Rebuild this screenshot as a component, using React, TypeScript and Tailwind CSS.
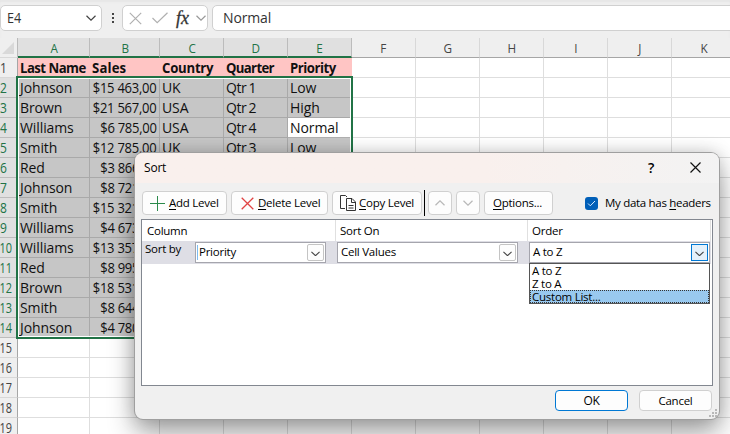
import { ReactNode } from "react";

const ui = "font-['Open_Sans','Noto_Sans',sans-serif]";
const columns = [
  { name: "A", width: 72 },
  { name: "B", width: 70 },
  { name: "C", width: 64 },
  { name: "D", width: 64 },
  { name: "E", width: 64 },
  { name: "F", width: 64 },
  { name: "G", width: 64 },
  { name: "H", width: 64 },
  { name: "I", width: 64 },
  { name: "J", width: 64 },
  { name: "K", width: 64 },
];

const headingFit = [
  "tracking-[-.55px]",
  "tracking-[.15px]",
  "tracking-[-.25px]",
  "tracking-[-.7px]",
  "tracking-[-.5px]",
];

const rows: string[][] = [
  ["Last Name", "Sales", "Country", "Quarter", "Priority"],
  ["Johnson", "$15 463,00", "UK", "Qtr 1", "Low"],
  ["Brown", "$21 567,00", "USA", "Qtr 2", "High"],
  ["Williams", "$6 785,00", "USA", "Qtr 4", "Normal"],
  ["Smith", "$12 785,00", "UK", "Qtr 3", "Low"],
  ["Red", "$3 866,00"],
  ["Johnson", "$8 721,00"],
  ["Smith", "$15 321,00"],
  ["Williams", "$4 673,00"],
  ["Williams", "$13 357,00"],
  ["Red", "$8 995,00"],
  ["Brown", "$18 531,00"],
  ["Smith", "$8 644,00"],
  ["Johnson", "$4 780,00"],
  [], [], [], [], [],
];

function Chevron({ className = "", w = 10, up = false }: { className?: string; w?: number; up?: boolean }) {
  return (
    <svg width={w} height={w / 2 + 1} viewBox="0 0 10 6" className={className} fill="none" stroke="currentColor" strokeWidth="1.2">
      <path d={up ? "M.5 5.2 5 .8l4.5 4.4" : "M.5.8 5 5.2 9.5.8"} />
    </svg>
  );
}

function FormulaBar() {
  return (
    <div className="flex h-[38px] items-start bg-[#efefef] pt-[5px] text-[14px] text-[#333] shadow-[inset_0_2px_2px_#e6e6e6]">
      <div className="flex h-[26px] w-[102px] shrink-0 items-center justify-between rounded-[5px] border border-[#d0d0d0] bg-white pr-[5px] pl-[6px]">
        <span className="origin-left scale-x-[.9] pb-px leading-[22px]">E4</span>
        <Chevron className="text-[#444]" />
      </div>
      <div className="ml-[9px] flex h-[26px] w-[3px] shrink-0 flex-col items-center justify-center gap-[2px]">
        <i className="size-[2px] bg-[#444]" />
        <i className="size-[2px] bg-[#444]" />
        <i className="size-[2px] bg-[#444]" />
      </div>
      <div className="ml-[8px] flex h-[26px] w-[86px] shrink-0 items-center rounded-[5px] border border-[#d0d0d0] bg-white pl-[6px]">
        <svg width="13" height="13" viewBox="0 0 13 13" fill="none" stroke="#b0b0b0" strokeWidth="1.2">
          <path d="m.8.8 11.4 11.4M12.2.8.8 12.2" />
        </svg>
        <svg width="16" height="12" viewBox="0 0 16 12" className="ml-[10px]" fill="none" stroke="#b0b0b0" strokeWidth="1.2">
          <path d="m.5 6 4.7 4.7L15.5.7" />
        </svg>
        <span className="ml-[8px] w-[16px] pb-px font-['Liberation_Serif',serif] text-[18px] leading-[20px] text-[#333] italic [-webkit-text-stroke:.3px]">fx</span>
        <Chevron className="ml-[4px] text-[#999]" />
      </div>
      <div className="ml-[4px] flex h-[26px] w-[530px] shrink-0 items-center rounded-l-[5px] border border-[#d0d0d0] bg-white pl-[10px]">
        <span className="pb-px leading-[22px] tracking-[-.15px]">Normal</span>
      </div>
    </div>
  );
}

function Sheet() {
  return (
    <div className="flex w-[800px] flex-col text-[14px] leading-[20px]">
      <div className="flex h-[20px]">
        <div className="flex w-[18px] items-end justify-end border-r border-b border-r-[#bbb] border-b-[#d8d8d8] bg-[#efefef] pr-[3px] pb-[3px]">
          <svg width="12" height="12" viewBox="0 0 12 12"><path d="M12 0v12H0z" fill="#d9d9d9" /></svg>
        </div>
        {columns.map((c, i) => (
          <div
            key={c.name}
            style={{ width: c.width }}
            className={
              i < 5
                ? "shrink-0 border-r border-b-2 border-r-[#bcbcbc] border-b-[#217346] bg-[#e0e0e0] pl-px text-center text-[13px] leading-[20px] text-[#217346]"
                : "shrink-0 border-r border-b border-r-[#d8d8d8] border-b-[#a6a6a6] bg-[#efefef] text-center text-[13px] leading-[20px] text-[#444]"
            }
          >
            <span className="inline-block scale-x-[.9]">{c.name}</span>
          </div>
        ))}
      </div>
      {rows.map((row, r) => (
        <div key={r} className="flex h-[20px]">
          <div
            className={
              "flex w-[18px] shrink-0 justify-end border-r border-b text-[14px] leading-[20px] " +
              (r > 0 && r < 14 ? "border-r-[#217346] border-b-[#bcbcbc] bg-[#e0e0e0] text-[#217346]" : "border-r-[#a6a6a6] border-b-[#d8d8d8] bg-[#efefef] text-[#444]") +
              (r < 9 ? " pr-[10px]" : " pr-[5px]")
            }
          >
            <span className={r < 9 ? "origin-right scale-x-[.86]" : "origin-right scale-x-[.78]"}>{r + 1}</span>
          </div>
          {columns.map((c, i) => {
            const selected = r > 0 && r < 14 && i < 5;
            const active = r === 3 && i === 4;
            const tone = r === 0 && i < 5
              ? "bg-[#ffc5c4] border-[#ffc5c4] font-bold"
              : active
                ? "bg-white border-[#b0b0b0]"
                : selected
                  ? "bg-[#c6c6c6] border-[#a9a9a9]"
                  : "bg-white border-[#dedede]";
            return (
              <div
                key={c.name}
                style={{ width: c.width }}
                className={
                  "flex shrink-0 border-r border-b pl-[2px] leading-[19px] whitespace-pre text-[#111] " + tone +
                  (i === 1 && r > 0 ? " justify-end pr-[2.5px]" : "")
                }
              >
                <span
                  className={
                    r === 0
                      ? "origin-left scale-x-[.94] " + (headingFit[i] ?? "")
                      : i === 1
                        ? "origin-right scale-x-[.93] tracking-[-.3px]"
                        : i === 3
                          ? "tracking-[-.5px] [word-spacing:-.8px]"
                          : "tracking-[-.1px]"
                  }
                >
                  {row[i] ?? ""}
                </span>
              </div>
            );
          })}
        </div>
      ))}
    </div>
  );
}

function ToolButton({ className, children }: { className: string; children?: ReactNode }) {
  return (
    <div className={"flex h-[24px] shrink-0 items-center rounded-[4px] border border-[#d0d0d0] bg-[#fdfdfd] " + className}>
      {children}
    </div>
  );
}

function Combo({ className, children, open = false, caret = false }: { className: string; children: ReactNode; open?: boolean; caret?: boolean }) {
  return (
    <div className={"flex h-[21px] shrink-0 items-center justify-between border border-[#a5a5ad] bg-white pr-px pl-px " + className}>
      <span className="flex items-center">
        <i className={"h-[15px] w-px " + (caret ? "bg-[#7dbcf0]" : "")} />
        <span className="ml-[1px] pb-[2px] leading-[16px]">{children}</span>
      </span>
      <span className={"flex h-[17px] w-[17px] items-center justify-center border pt-[2px] " + (open ? "border-[#0078d4] bg-[#e5f1fb]" : "rounded-[2px] border-[#c4c4c4] bg-[#fdfdfd]")}>
        <Chevron w={9} className="text-[#444]" />
      </span>
    </div>
  );
}

function SortDialog() {
  return (
    <div className="absolute top-[153px] left-[135px] flex h-[266px] w-[584px] flex-col rounded-[8px] bg-[#f0f0f0] text-[11.5px] leading-[16px] tracking-[-.25px] text-black shadow-[0_0_0_1px_#9f9f9f,0_16px_28px_rgba(0,0,0,.32),0_0_18px_rgba(0,0,0,.22)]">
      <div className="flex h-[30px] shrink-0 items-center rounded-t-[8px] bg-linear-to-r from-[#f9f0ed] via-[#f9f0ed] via-60% to-[#f3f3f3] pr-[18px] pl-[9px]">
        <span className="text-[12px] tracking-[-.2px]">Sort</span>
        <span className="ml-auto pb-px text-[14px] font-semibold">?</span>
        <svg width="11" height="11" viewBox="0 0 11 11" className="mb-[2px] ml-[36px]" fill="none" stroke="#111" strokeWidth="1.2">
          <path d="m.5.5 10 10M10.500.5l-10 10" />
        </svg>
      </div>
      <div className="mt-[7px] flex h-[26px] shrink-0 items-center pl-[7px]">
        <ToolButton className="w-[85px] pl-[7px]">
          <svg width="15" height="15" viewBox="0 0 15 15" fill="none" stroke="#2b8a4b" strokeWidth="1"><path d="M7.500 0v15M0 7.500h15" /></svg>
          <span className="ml-[4px]"><u className="underline-offset-2">A</u>dd Level</span>
        </ToolButton>
        <ToolButton className="ml-[4px] w-[97px] pl-[9px]">
          <svg width="13" height="13" viewBox="0 0 13 13" fill="none" stroke="#e04343" strokeWidth="1.3"><path d="m.7.7 11.600 11.600M12.300.7.7 12.300" /></svg>
          <span className="ml-[4px]"><u className="underline-offset-2">D</u>elete Level</span>
        </ToolButton>
        <ToolButton className="ml-[4px] w-[90px] pl-[7px]">
          <svg width="17" height="17" viewBox="0 0 17 17" fill="none" stroke="#333" strokeWidth="1">
            <path d="M5 13.500H.5v-13h5l1.500 1.500M6.500 3.500h5.500l3.500 3.500v8.500h-9zM11.500 3.500v4h4M8.500 10.500h5M8.500 13h5" />
          </svg>
          <span className="ml-[2px]"><u className="underline-offset-2">C</u>opy Level</span>
        </ToolButton>
        <i className="ml-[2px] h-[26px] w-px bg-black" />
        <ToolButton className="ml-[3px] w-[24px] justify-center"><Chevron up className="text-[#b8b8b8]" /></ToolButton>
        <ToolButton className="ml-[4px] w-[24px] justify-center"><Chevron className="text-[#b8b8b8]" /></ToolButton>
        <ToolButton className="ml-[4px] w-[69px] pl-[8px]"><span><u className="underline-offset-2">O</u>ptions...</span></ToolButton>
        <span className="ml-[32px] flex size-[13px] items-center justify-center rounded-[3px] bg-[#005fb8]">
          <svg width="9" height="7" viewBox="0 0 9 7" fill="none" stroke="#d8ebff" strokeWidth="1"><path d="m1 3.500 2.300 2.300L8 1" /></svg>
        </span>
        <span className="ml-[7px] whitespace-nowrap tracking-[-.3px]">My data has <u className="underline-offset-2">h</u>eaders</span>
      </div>
      <div className="mt-[3px] ml-[6px] flex h-[167px] w-[572px] shrink-0 flex-col border border-[#828790] bg-white">
        <div className="flex h-[21px] shrink-0 items-center">
          <span className="h-full w-[194px] border-r border-[#e0e0e0] pl-[5px] leading-[22px]">Column</span>
          <span className="h-full w-[192px] border-r border-[#e0e0e0] pl-[4px] leading-[22px]">Sort On</span>
          <span className="h-full w-[183px] border-r border-[#e0e0e0] pl-[4px] leading-[22px]">Order</span>
        </div>
        <div className="relative flex h-[23px] w-[569px] shrink-0 items-center bg-[#dedee5]">
          <span className="w-[53px] self-start pl-[3px]">Sort by</span>
          <Combo className="w-[131px]" caret>Priority</Combo>
          <Combo className="ml-[11px] w-[181px]">Cell Values</Combo>
          <Combo className="ml-[11px] w-[181px]" open>A to Z</Combo>
          <div className="absolute top-[22px] left-[387px] flex h-[41px] w-[181px] flex-col border border-[#555] bg-white leading-[14px]">
            <span className="h-[13px] pl-[2px]">A to Z</span>
            <span className="h-[13px] pl-[2px]">Z to A</span>
            <span className="h-[13px] border border-dotted border-[#333] bg-[#99c9ef] pl-px leading-[12px]">Custom List...</span>
          </div>
        </div>
      </div>
      <div className="mt-[4px] flex justify-end gap-[11px] pr-[7px]">
        <div className="flex h-[21px] w-[73px] items-center justify-center rounded-[4px] border border-[#0078d4] bg-[#fdfdfd] text-[12px]">OK</div>
        <div className="flex h-[21px] w-[73px] items-center justify-center rounded-[4px] border border-[#d0d0d0] bg-[#fdfdfd]">Cancel</div>
      </div>
      <svg width="8" height="8" viewBox="0 0 8 8" className="absolute right-[2px] bottom-[2px]" fill="#b8b8b8">
        <path d="M6 0h2v2H6zM3 3h2v2H3zM6 3h2v2H6zM0 6h2v2H0zM3 6h2v2H3zM6 6h2v2H6z" />
      </svg>
    </div>
  );
}

export default function App() {
  return (
    <div className={"relative h-[434px] w-[730px] overflow-hidden bg-white " + ui}>
      <FormulaBar />
      <Sheet />
      <div className="absolute top-[76px] left-[16px] h-[263px] w-[337px] border-2 border-[#217346] shadow-[inset_0_0_0_1px_#fff]" />
      <SortDialog />
    </div>
  );
}
